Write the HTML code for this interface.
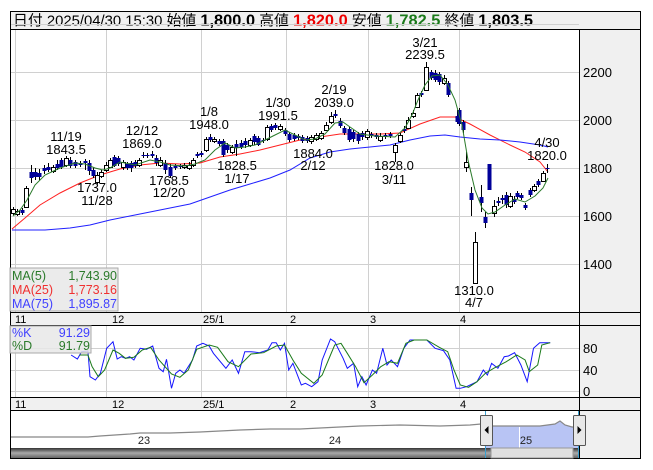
<!DOCTYPE html>
<html><head><meta charset="utf-8">
<style>
html,body{margin:0;padding:0;background:#fff;width:653px;height:470px;overflow:hidden}
body{font-family:"Liberation Sans","Noto Sans CJK JP",sans-serif}
svg{position:absolute;left:0;top:0}
</style></head>
<body>
<svg id="s" width="653" height="470" xmlns="http://www.w3.org/2000/svg" font-family="Liberation Sans, Noto Sans CJK JP, sans-serif">
<rect x="0" y="0" width="653" height="470" fill="#fff"/>
<rect x="10.5" y="11.5" width="630" height="18" fill="#f0f0f0" stroke="#000"/>
<text x="13" y="25.5" font-size="14.5" fill="#000" textLength="520" lengthAdjust="spacingAndGlyphs">日付 2025/04/30 15:30 始値 <tspan font-weight="bold" font-size="16">1,800.0</tspan> 高値 <tspan font-weight="bold" font-size="16" fill="#e00">1,820.0</tspan> 安値 <tspan font-weight="bold" font-size="16" fill="#1a7a1a">1,782.5</tspan> 終値 <tspan font-weight="bold" font-size="16">1,803.5</tspan></text>
<rect x="580" y="30" width="60" height="282" fill="#f0f0f0"/>
<rect x="580" y="325" width="60" height="72" fill="#f0f0f0"/>
<rect x="580" y="410" width="60" height="48" fill="#f0f0f0"/>
<rect x="10" y="312" width="630" height="13" fill="#f0f0f0"/>
<rect x="10" y="397" width="630" height="13" fill="#f0f0f0"/>
<g id="grid" stroke="#d0d0d0" stroke-width="1"></g>
<g id="lines"></g>
<g stroke="#000" stroke-width="1">
<line x1="579.5" y1="30" x2="579.5" y2="458"/>
<line x1="10" y1="312.5" x2="640" y2="312.5"/>
<line x1="10" y1="325.5" x2="640" y2="325.5"/>
<line x1="10" y1="397.5" x2="640" y2="397.5"/>
<line x1="10" y1="410.5" x2="640" y2="410.5"/>
<rect x="10.5" y="11.5" width="630" height="447" fill="none"/>
</g>
<g font-size="11" fill="#000" id="axt"></g>
<g font-size="13" fill="#000" text-anchor="middle" id="ann"></g>
<rect x="10" y="268" width="108" height="43" fill="#e8e8e8" fill-opacity="0.85" stroke="#aaa"/>
<text x="12" y="280" font-size="12.5" fill="#2a7a2a">MA(5)</text><text x="117" y="280" font-size="12.5" fill="#2a7a2a" text-anchor="end">1,743.90</text>
<text x="12" y="294" font-size="12.5" fill="#f03030">MA(25)</text><text x="117" y="294" font-size="12.5" fill="#f03030" text-anchor="end">1,773.16</text>
<text x="12" y="308" font-size="12.5" fill="#4040ff">MA(75)</text><text x="117" y="308" font-size="12.5" fill="#4040ff" text-anchor="end">1,895.87</text>
<rect x="10" y="326" width="81" height="27" fill="#e8e8e8" fill-opacity="0.85" stroke="#aaa"/>
<text x="12" y="337" font-size="12.5" fill="#4040ff">%K</text><text x="90" y="337" font-size="12.5" fill="#4040ff" text-anchor="end">91.29</text>
<text x="12" y="350" font-size="12.5" fill="#2a7a2a">%D</text><text x="90" y="350" font-size="12.5" fill="#2a7a2a" text-anchor="end">91.79</text>
<g id="nav"></g>
</svg>
<script>
var NS="http://www.w3.org/2000/svg";
function el(p,t,a,txt){var e=document.createElementNS(NS,t);for(var k in a)e.setAttribute(k,a[k]);if(txt!==undefined)e.textContent=txt;document.getElementById(p).appendChild(e);return e;}
var vx=[15,106,201,286,368,459];
vx.forEach(function(x){el('grid','line',{x1:x+.5,y1:30,x2:x+.5,y2:312});el('grid','line',{x1:x+.5,y1:326,x2:x+.5,y2:397});});
[24,72,120,168,216,264].forEach(function(y){el('grid','line',{x1:11,y1:y+.5,x2:579,y2:y+.5});});
[348,370,391].forEach(function(y){el('grid','line',{x1:11,y1:y+.5,x2:579,y2:y+.5});});
var ml=[[15,'11'],[112,'12'],[203,'25/1'],[290,'2'],[370,'3'],[460,'4']];
ml.forEach(function(m){el('axt','text',{x:m[0],y:323,'font-size':11},m[1]);el('axt','text',{x:m[0],y:408,'font-size':11},m[1]);});
[[77,'2200'],[125,'2000'],[173,'1800'],[221,'1600'],[269,'1400']].forEach(function(a){el('axt','text',{x:583,y:a[0],'font-size':13},a[1]);});
[[353,'80'],[375,'40'],[396,'0']].forEach(function(a){el('axt','text',{x:583,y:a[0],'font-size':13},a[1]);});
var an=[[66,141,'11/19'],[66,154,'1843.5'],[97,192,'1737.0'],[97,205,'11/28'],[142,135,'12/12'],[142,148,'1869.0'],[169,185,'1768.5'],[169,197,'12/20'],[209,116,'1/8'],[209,129,'1948.0'],[237,170,'1828.5'],[237,183,'1/17'],[278,107,'1/30'],[278,120,'1991.5'],[313,158,'1884.0'],[313,170,'2/12'],[334,94,'2/19'],[334,107,'2039.0'],[394,170,'1828.0'],[394,184,'3/11'],[425,47,'3/21'],[425,59,'2239.5'],[474,295,'1310.0'],[474,307,'4/7'],[547,147,'4/30'],[547,160,'1820.0']];
an.forEach(function(a){el('ann','text',{x:a[0],y:a[1]},a[2]);});
function pl(pts,c){el('lines','polyline',{points:pts.map(function(p){return p.join(',')}).join(' '),fill:'none',stroke:c,'stroke-width':1});}
pl([[12,229],[25,218],[40,205],[60,193],[80,183],[100,175],[120,169],[140,165],[160,163],[180,164],[200,163],[220,157],[240,154],[260,150],[280,145],[300,140],[320,137],[340,134],[360,134],[380,134],[400,133],[420,124],[440,117],[455,117],[470,124],[490,135],[510,145],[525,152],[540,162],[548,172]],'#ff2020');
pl([[12,230],[45,230],[70,228],[90,225],[110,220],[130,216],[150,212],[170,208],[190,204],[210,197],[230,190],[250,184],[270,178],[290,170],[310,158],[330,152],[350,149],[370,147],[390,145],[410,140],[430,136],[445,135],[460,137],[480,139],[500,140],[520,142],[540,145],[548,147]],'#2020ff');
var C=[[13,209,213,207,215,'w'],[17,211,214,209,216,'w'],[22,210,213,208,215,'b'],[26,188,207,186,208,'w'],[31,172,178,165,183,'b'],[35,172,177,168,180,'b'],[39,173,177,169,180,'b'],[44,168,171,165,174,'b'],[48,167,170,163,172,'b'],[53,167,171,165,173,'w'],[57,164,168,160,170,'b'],[61,160,167,158,169,'b'],[66,158,165,156,167,'w'],[70,160,166,157,168,'b'],[75,162,166,160,168,'b'],[80,163,165,161,167,'b'],[85,161,163,159,170,'b'],[89,163,171,160,175,'b'],[93,170,176,167,178,'b'],[97,175,182,172,184,'w'],[101,172,176,170,178,'w'],[106,165,170,162,172,'w'],[110,160,167,158,168,'w'],[114,157,166,155,167,'b'],[118,158,164,156,166,'b'],[123,162,167,160,170,'w'],[127,164,168,162,170,'b'],[131,163,168,161,172,'b'],[135,162,166,160,168,'b'],[139,160,165,158,167,'w'],[143,155,156,152,158,'b'],[147,155,156,153,158,'b'],[152,154,156,151,158,'b'],[156,158,163,155,166,'b'],[160,160,165,157,167,'w'],[165,163,170,160,174,'b'],[170,167,176,164,178,'b'],[175,166,168,164,170,'b'],[180,166,167,164,169,'b'],[184,165,167,163,169,'w'],[189,165,168,162,170,'w'],[193,160,165,158,167,'w'],[197,154,156,152,158,'b'],[201,153,155,151,157,'b'],[206,139,150,137,152,'w'],[210,137,140,134,142,'b'],[214,139,141,137,143,'w'],[219,141,144,139,146,'b'],[223,141,155,139,157,'b'],[227,145,150,143,153,'b'],[232,147,152,145,154,'w'],[236,144,148,140,156,'b'],[241,143,147,140,149,'b'],[245,141,145,138,148,'b'],[250,140,145,138,147,'w'],[254,136,142,134,145,'b'],[258,138,145,136,146,'b'],[263,140,141,138,143,'b'],[267,127,139,125,141,'w'],[271,126,130,124,132,'b'],[275,125,128,123,130,'b'],[280,126,129,124,131,'w'],[285,130,134,128,136,'b'],[289,134,140,132,142,'b'],[294,135,139,133,141,'b'],[298,136,138,134,140,'b'],[302,137,141,135,143,'b'],[307,138,141,136,143,'b'],[311,137,141,135,144,'w'],[316,135,139,133,141,'w'],[321,133,138,131,140,'w'],[326,125,130,122,131,'w'],[331,116,122,112,124,'w'],[335,114,116,110,118,'b'],[340,121,126,118,128,'b'],[344,128,133,126,135,'b'],[349,129,140,127,142,'b'],[353,132,139,130,142,'b'],[358,134,141,132,144,'b'],[362,133,137,131,140,'b'],[367,131,137,129,140,'w'],[371,134,136,132,138,'b'],[376,135,137,133,139,'b'],[380,136,140,133,142,'w'],[385,135,137,133,139,'b'],[390,134,136,132,138,'b'],[395,145,152,143,162,'w'],[400,135,141,133,143,'w'],[404,129,131,126,133,'b'],[408,120,128,117,129,'w'],[413,113,116,110,118,'w'],[417,95,107,93,108,'w'],[421,93,95,91,97,'b'],[426,67,90,62,91,'w'],[431,72,78,70,80,'b'],[435,73,80,70,82,'b'],[439,74,82,72,85,'b'],[444,78,83,75,85,'w'],[448,83,95,81,97,'b'],[457,116,122,110,124,'b'],[459,110,124,108,126,'b'],[463,122,130,120,133,'b'],[466,162,167,152,172,'w'],[471,193,200,187,216,'b'],[475,242,283,232,284,'w'],[481,197,203,185,212,'b'],[485,217,223,212,228,'b'],[489,164,190,164,190,'b'],[494,206,213,200,217,'w'],[498,201,203,197,206,'b'],[502,198,200,195,204,'b'],[506,195,205,192,208,'b'],[510,196,206,193,208,'w'],[514,199,202,196,204,'b'],[517,193,197,191,199,'b'],[521,195,198,193,200,'b'],[525,205,208,203,210,'b'],[530,190,195,188,197,'b'],[534,186,190,184,192,'w'],[538,181,185,179,187,'b'],[543,173,181,171,182,'w'],[547,168,169,164,173,'b']];
C.forEach(function(c){var x=c[0];el('lines','line',{x1:x+.5,y1:c[3],x2:x+.5,y2:c[4],stroke:'#000'});
 if(c[5]=='w')el('lines','rect',{x:x-1.5,y:c[1]+.5,width:4,height:Math.max(1,c[2]-c[1]),fill:'#fff',stroke:'#000'});
 else el('lines','rect',{x:x-1.5,y:c[1],width:4,height:Math.max(1,c[2]-c[1]),fill:'#000099'});});
pl([[13,216],[20,210],[27,200],[35,185],[45,175],[60,168],[75,163],[85,164],[95,168],[103,170],[110,168],[120,162],[135,165],[150,160],[160,162],[170,165],[185,166],[195,164],[205,160],[215,150],[225,143],[235,148],[245,147],[255,145],[265,140],[275,135],[285,130],[295,135],[305,140],[315,139],[325,134],[335,123],[343,122],[350,127],[360,134],[375,136],[395,137],[405,128],[412,115],[418,100],[425,85],[432,76],[440,75],[448,85],[455,100],[462,125],[468,160],[475,190],[482,208],[488,214],[495,212],[505,205],[515,199],[525,202],[535,196],[543,188],[548,178]],'#2a7a2a');
function sp(a){return a.map(function(p){return [(p[0]/2.39).toFixed(1),(p[1]/3+260).toFixed(1)];});}
var K=[[170,285],[185,297],[195,275],[210,273],[215,350],[228,360],[240,340],[255,265],[270,245],[280,297],[290,290],[300,295],[310,290],[320,300],[335,265],[350,268],[365,258],[380,325],[390,335],[398,298],[410,385],[420,340],[430,330],[440,340],[460,300],[470,258],[485,250],[500,258],[510,280],[540,325],[555,300],[570,340],[585,275],[600,275],[620,278],[640,270],[650,248],[660,248],[670,270],[680,250],[690,330],[700,310],[720,375],[730,370],[745,380],[760,365],[770,300],[790,237],[800,245],[820,295],[830,325],[845,310],[855,380],[865,350],[875,375],[890,330],[900,340],[915,265],[925,315],[935,300],[950,320],[965,265],[980,240],[1020,240],[1040,265],[1060,272],[1075,300],[1090,385],[1100,385],[1115,380],[1140,365],[1155,330],[1165,345],[1175,310],[1190,325],[1205,290],[1215,288],[1230,278],[1245,315],[1260,365],[1275,265],[1290,248],[1315,248]];
var D=[[190,285],[210,285],[220,320],[235,350],[250,330],[270,270],[285,280],[300,295],[320,292],[340,270],[360,262],[380,300],[410,342],[430,352],[450,330],[470,268],[500,255],[520,262],[545,305],[570,320],[600,282],[630,278],[660,258],[680,255],[700,300],[720,340],[750,370],[770,345],[790,285],[800,255],[815,250],[830,280],[850,320],[870,368],[890,345],[910,320],[930,305],[950,310],[970,250],[990,240],[1020,240],[1050,262],[1070,275],[1085,330],[1100,375],[1120,382],[1140,365],[1160,340],[1180,325],[1210,305],[1235,285],[1255,300],[1265,335],[1285,315],[1295,255],[1315,248]];
pl(sp(K),'#1515ff');pl(sp(D),'#1a7a1a');
var nv=[[11,437],[60,437],[88,437],[100,436],[130,434],[140,433],[170,433],[200,432],[240,430],[270,429],[300,429],[340,427],[360,426],[400,425],[440,426],[470,425],[481,424],[485,426],[520,426],[540,426],[555,424],[560,421],[565,425],[572,427],[579,427]];
var sel=nv.filter(function(p){return p[0]>=481;});
el('nav','polygon',{points:'485,448 '+sel.map(function(p){return p.join(',')}).join(' ')+' 579,448',fill:'#b8c4f4'});
el('nav','polyline',{points:nv.map(function(p){return p.join(',')}).join(' '),fill:'none',stroke:'#888','stroke-width':1.2});
el('nav','line',{x1:519.5,y1:427,x2:519.5,y2:448,stroke:'#fff'});
[[144,'23'],[335,'24'],[526,'25']].forEach(function(a){el('nav','text',{x:a[0],y:444,'font-size':11,fill:'#222','text-anchor':'middle'},a[1]);});
var g=el('nav','linearGradient',{id:'sg',x1:0,y1:0,x2:0,y2:1});
el('sg','stop',{offset:0,'stop-color':'#333'});el('sg','stop',{offset:0.5,'stop-color':'#aaa'});el('sg','stop',{offset:1,'stop-color':'#666'});
el('nav','rect',{x:11,y:448,width:568,height:10,fill:'url(#sg)'});
el('nav','rect',{x:491,y:448,width:82,height:10,fill:'#e0e0e0',stroke:'#999'});
el('nav','line',{x1:485.5,y1:411,x2:485.5,y2:458,stroke:'#3aa0d0'});
el('nav','line',{x1:578.5,y1:411,x2:578.5,y2:458,stroke:'#3aa0d0'});
[[480,'l'],[573,'r']].forEach(function(h){el('nav','rect',{x:h[0]+.5,y:415.5,width:12,height:30,fill:'#e8e8e8',stroke:'#555',rx:1});
 var cx=h[0]+6.5;el('nav','polygon',{points:h[1]=='l'?(cx+2)+',426 '+(cx+2)+',434 '+(cx-2)+',430':(cx-2)+',426 '+(cx-2)+',434 '+(cx+2)+',430',fill:'#000'});});
</script>
</body></html>
